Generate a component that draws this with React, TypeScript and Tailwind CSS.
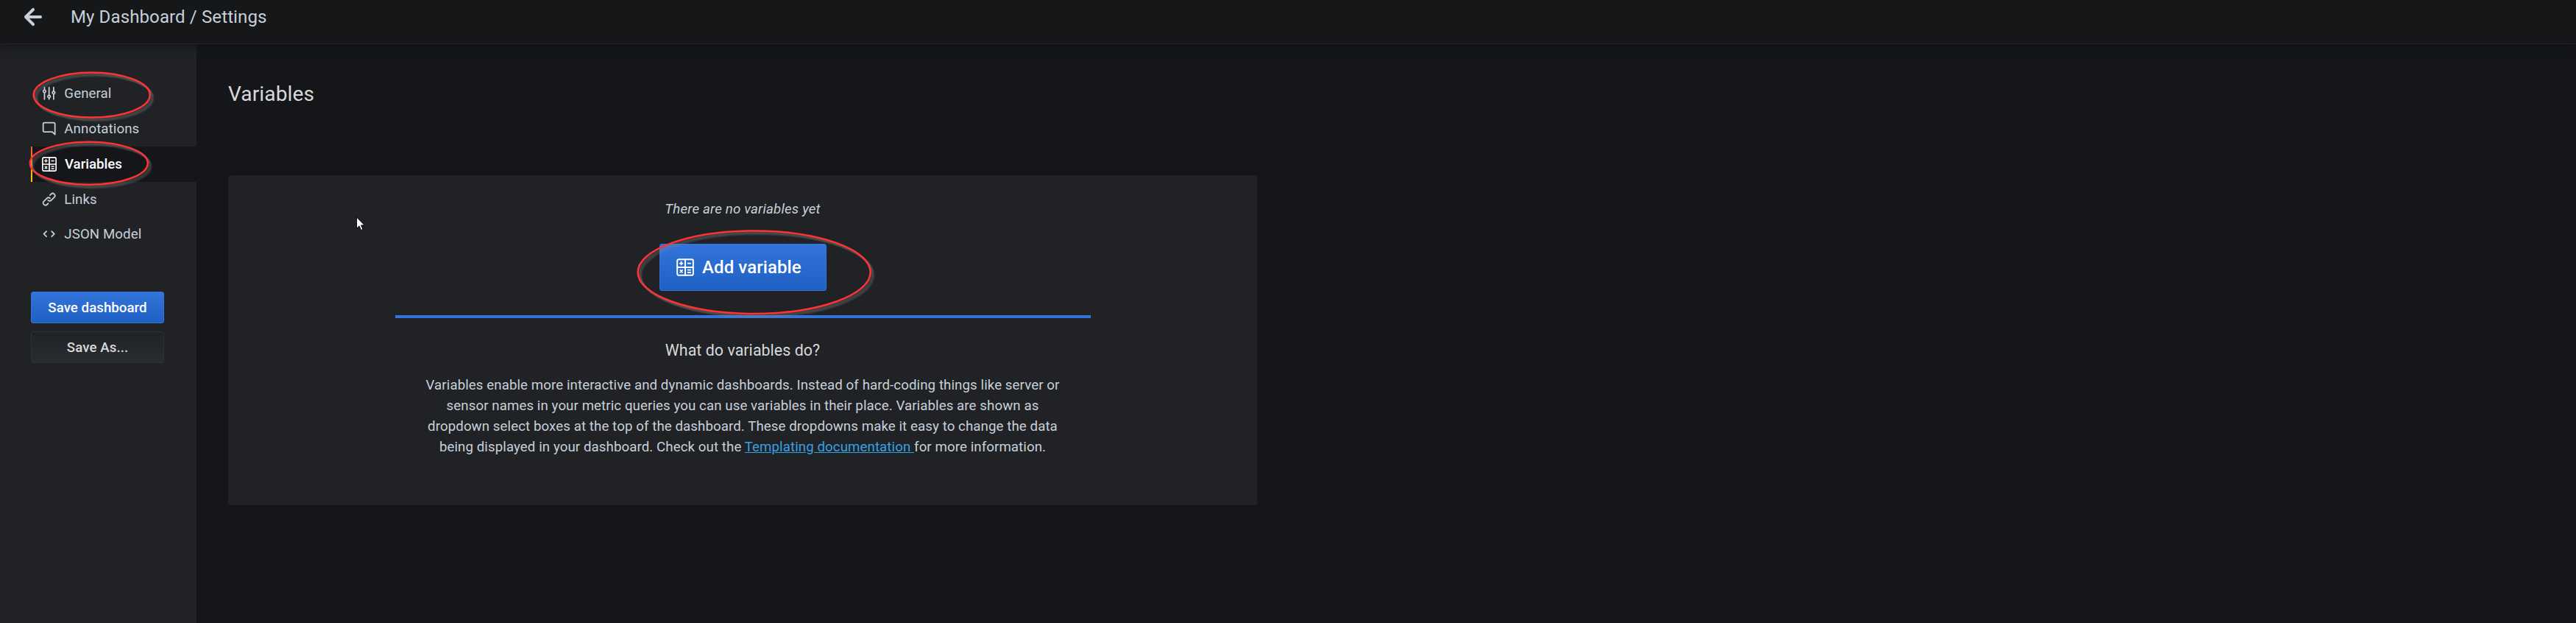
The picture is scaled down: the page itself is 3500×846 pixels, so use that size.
import React from "react";

const ICONS = {
  back: "M17,11H9.41l3.3-3.29a1,1,0,1,0-1.42-1.42l-5,5a1,1,0,0,0-.21.33,1,1,0,0,0,0,.76,1,1,0,0,0,.21.33l5,5a1,1,0,0,0,1.42,0,1,1,0,0,0,0-1.42L9.41,13H17a1,1,0,0,0,0-2Z",
  sliders:
    "M20,8.18V3a1,1,0,0,0-2,0V8.18a3,3,0,0,0,0,5.64V21a1,1,0,0,0,2,0V13.82a3,3,0,0,0,0-5.64ZM19,12a1,1,0,1,1,1-1A1,1,0,0,1,19,12Zm-6,2.18V3a1,1,0,0,0-2,0V14.18a3,3,0,0,0,0,5.64V21a1,1,0,0,0,2,0V19.82a3,3,0,0,0,0-5.64ZM12,18a1,1,0,1,1,1-1A1,1,0,0,1,12,18ZM6,6.18V3A1,1,0,0,0,4,3V6.18a3,3,0,0,0,0,5.64V21a1,1,0,0,0,2,0V11.82A3,3,0,0,0,6,6.18ZM5,10A1,1,0,1,1,6,9,1,1,0,0,1,5,10Z",
  comment:
    "M19,2H5A3,3,0,0,0,2,5V15a3,3,0,0,0,3,3H16.59l3.7,3.71A1,1,0,0,0,21,22a.84.84,0,0,0,.38-.08A1,1,0,0,0,22,21V5A3,3,0,0,0,19,2Zm1,16.59-2.29-2.3A1,1,0,0,0,17,16H5a1,1,0,0,1-1-1V5A1,1,0,0,1,5,4H19a1,1,0,0,1,1,1Z",
  link: "M10,17.55,8.23,19.27a2.47,2.47,0,0,1-3.5-3.5l4.54-4.55a2.46,2.46,0,0,1,3.39-.09l.12.1a1,1,0,0,0,1.4-1.43A2.75,2.75,0,0,0,14,9.59a4.46,4.46,0,0,0-6.09.22L3.31,14.36a4.48,4.48,0,0,0,6.33,6.33L11.37,19A1,1,0,0,0,10,17.55ZM20.69,3.31a4.49,4.49,0,0,0-6.33,0L12.63,5A1,1,0,0,0,14,6.45l1.73-1.72a2.47,2.47,0,0,1,3.5,3.5l-4.54,4.55a2.46,2.46,0,0,1-3.39.09l-.12-.1a1,1,0,0,0-1.4,1.43,2.75,2.75,0,0,0,.23.21,4.47,4.47,0,0,0,6.09-.22l4.55-4.55A4.49,4.49,0,0,0,20.69,3.31Z",
  code: "M8.71,7.29a1,1,0,0,0-1.42,0l-4,4a1,1,0,0,0,0,1.42l4,4a1,1,0,0,0,1.42,0,1,1,0,0,0,0-1.42L5.41,12l3.3-3.29A1,1,0,0,0,8.71,7.29Zm12,4-4-4a1,1,0,1,0-1.42,1.42L18.59,12l-3.3,3.29a1,1,0,0,0,0,1.42,1,1,0,0,0,1.42,0l4-4A1,1,0,0,0,20.71,11.29Z",
};

function Icon({ d, className }: { d: string; className: string }) {
  return (
    <svg viewBox="0 0 24 24" fill="currentColor" className={className}>
      <path d={d} />
    </svg>
  );
}

function CalculatorIcon({ className }: { className: string }) {
  return (
    <svg viewBox="0 0 24 24" fill="none" stroke="currentColor" strokeWidth="1.8" strokeLinecap="round" className={className}>
      <rect x="2" y="2" width="20" height="20" rx="2" />
      <path d="M12 2v20M2 12h20" />
      <path
        d="M5.4 7h3.4M7.1 5.3v3.4M15.4 7h3.2M5.8 15.6l2.6 2.6M8.4 15.6l-2.6 2.6M15.4 15.3h3.2M15.4 18.5h3.2"
        strokeWidth="1.7"
      />
    </svg>
  );
}

const NAV = [
  { label: "General", height: "h-12", icon: <Icon d={ICONS.sliders} className="size-[21.33px]" /> },
  { label: "Annotations", height: "h-12", icon: <Icon d={ICONS.comment} className="size-[21.33px]" /> },
  { label: "Variables", height: "h-12", active: true, icon: <CalculatorIcon className="size-[22px]" /> },
  { label: "Links", height: "h-[47px]", icon: <Icon d={ICONS.link} className="size-[21.33px]" /> },
  { label: "JSON Model", height: "h-12", icon: <Icon d={ICONS.code} className="size-[21.33px]" /> },
];

const RINGS = [
  { cx: 124.7, cy: 129, rx: 79, ry: 30.5 },
  { cx: 120.8, cy: 221.7, rx: 80, ry: 29 },
  { cx: 1024.6, cy: 369.7, rx: 158, ry: 56.3 },
];

function Rings() {
  return (
    <svg className="pointer-events-none absolute inset-0 z-20" width="3500" height="846" fill="none">
      {RINGS.map((r) => (
        <g key={r.cx}>
          {[4.5, 3.5, 2.5, 1.5].map((o) => (
            <ellipse key={o} {...r} cx={r.cx + o} cy={r.cy + o} stroke="#8c8c8c" strokeOpacity="0.14" strokeWidth="3" />
          ))}
          <ellipse {...r} stroke="#ff3333" strokeWidth="2.5" />
        </g>
      ))}
    </svg>
  );
}

export default function App() {
  return (
    <div className="relative flex h-[846px] w-[3500px] flex-col overflow-hidden bg-[#141619] font-[Roboto,sans-serif] text-[18.667px] leading-[28px] text-[#c7d0d9]">
      <header className="relative z-10 flex h-[60px] shrink-0 items-start border-b border-[#202226] bg-[#151719] pl-[21px] shadow-[0_0_16px_#0f1013]">
        <Icon d={ICONS.back} className="-mt-px size-12" />
        <h1 className="ml-[27px] mt-[5px] text-[24px] leading-[36px] tracking-[0.12px]">My Dashboard / Settings</h1>
      </header>
      <div className="flex min-h-0 flex-1">
        <aside className="flex w-[267px] flex-col bg-[#202226] pl-[42px] pt-[43px]">
          <nav>
            {NAV.map((item) => (
              <a
                key={item.label}
                className={`${item.height} ${
                  item.active
                    ? "relative flex items-center gap-[10px] bg-[#141619] pl-[14px] font-medium text-white"
                    : "flex items-center gap-[10px] pl-[14px] tracking-[0.1px]"
                }`}
              >
                {item.active && (
                  <span className="absolute left-0 top-0 h-full w-[2px] bg-linear-to-b from-[#f05a28] to-[#fbca0a]" />
                )}
                {item.icon}
                <span>{item.label}</span>
              </a>
            ))}
          </nav>
          <div className="mt-[54px] flex w-[181px] flex-col gap-[11px] font-medium">
            <button className="h-[43px] rounded-[3px] border border-[#3274d9] bg-linear-to-b from-[#3274d9] to-[#1f60c4] tracking-[0.05px] text-white">
              Save dashboard
            </button>
            <button className="h-[43px] rounded-[3px] border border-[#2c3235] bg-linear-to-b from-[#202226] to-[#292c30] tracking-[0.1px] text-[#d8d9da]">
              Save As...
            </button>
          </div>
        </aside>
        <main className="flex flex-col pl-[43px] pt-[50px]">
          <h2 className="text-[28px] leading-[35px] tracking-[0.15px] text-[#d8d9da]">Variables</h2>
          <section className="mt-[93px] flex h-[448px] w-[1398px] flex-col items-center rounded-[4px] bg-[#202226] pt-[32px]">
            <p className="italic tracking-[0.2px]">There are no variables yet</p>
            <button className="ml-px mt-[33px] flex h-16 w-[227px] items-center rounded-[3px] border border-[#3274d9] bg-linear-to-b from-[#3274d9] to-[#1f60c4] pl-[21px] text-[24px] font-medium tracking-[0.1px] text-white">
              <CalculatorIcon className="size-[26px]" />
              <span className="ml-[10px]">Add variable</span>
            </button>
            <div className="ml-px mt-[33px] h-1 w-[945px] bg-[#3274d9]" />
            <h3 className="mt-[30px] text-[21.333px] leading-[28px] tracking-[0.07px] text-[#d8d9da]">
              What do variables do?
            </h3>
            <p className="mt-[19px] text-center tracking-[0.095px]">
              Variables enable more interactive and dynamic dashboards. Instead of hard-coding things like server or
              <br />
              sensor names in your metric queries you can use variables in their place. Variables are shown as
              <br />
              dropdown select boxes at the top of the dashboard. These dropdowns make it easy to change the data
              <br />
              being displayed in your dashboard. Check out the{" "}
              <a className="text-[#33a2e5] underline">Templating documentation </a>for more information.
            </p>
          </section>
        </main>
      </div>
      <Rings />
      <svg className="absolute left-[484px] top-[294px] z-30" width="13" height="20" viewBox="0 0 13 20">
        <path d="M.6 1v15.2l3.4-3.3 2.5 5.6 2.6-1.1-2.4-5.5h4.7z" fill="white" stroke="black" strokeWidth="1" />
      </svg>
    </div>
  );
}
